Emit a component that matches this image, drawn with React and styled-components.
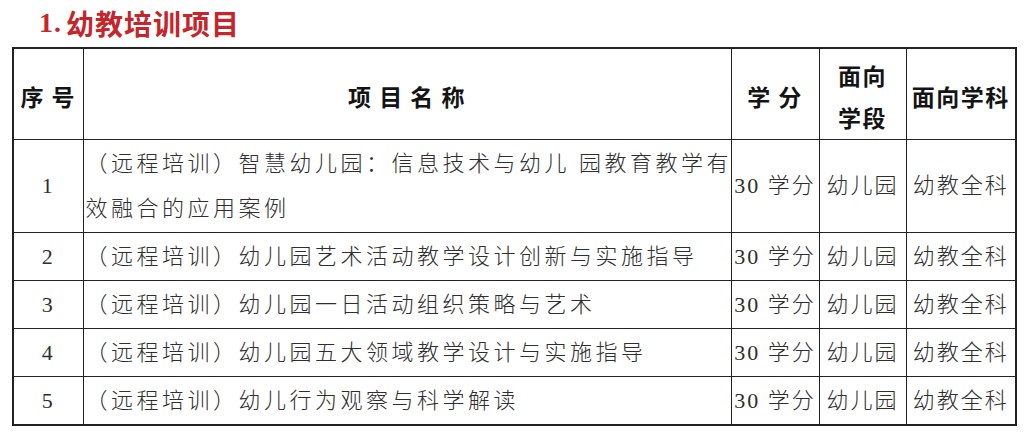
import styled, { createGlobalStyle } from 'styled-components';

const GlobalStyle = createGlobalStyle`
  html, body {
    margin: 0;
    padding: 0;
    background: #ffffff;
  }
`;

const Page = styled.div`
  width: 1025px;
  height: 437px;
  padding: 0 11px 0 12px;
  box-sizing: border-box;
  overflow: hidden;
  background: #fff;
`;

const Title = styled.h2`
  margin: 0;
  height: 47px;
  display: flex;
  align-items: center;
  padding: 0 0 2px 27px;
  box-sizing: border-box;
  font-family: 'Noto Sans CJK SC', sans-serif;
  font-size: 28px;
  font-weight: 700;
  color: #c4262b;
  letter-spacing: 1px;
`;

const Num = styled.span`
  font-family: 'Liberation Serif', serif;
  font-weight: 700;
  margin-right: 4px;
`;

const Table = styled.table`
  width: 1003px;
  border-collapse: collapse;
  table-layout: fixed;
  border: 2px solid #222;
`;

const HeadRow = styled.tr`
  height: 91px;
`;

const Row = styled.tr`
  height: ${(p) => p.$h}px;
`;

const Th = styled.th`
  border: 1.5px solid #222;
  padding: 4px 0 0;
  font-family: 'Noto Sans CJK SC', sans-serif;
  font-size: 23px;
  font-weight: 700;
  color: #141414;
  letter-spacing: 1.5px;
  line-height: 42px;
  text-align: center;
  vertical-align: middle;
  white-space: pre;
`;

const Td = styled.td`
  border: 1.5px solid #222;
  padding: ${(p) => (p.$left ? '0 0 0 2px' : '0')};
  font-family: 'Liberation Serif', 'Noto Sans CJK SC', serif;
  font-size: 22px;
  font-weight: 300;
  color: #2e2e2e;
  letter-spacing: ${(p) => (p.$left ? '3.5px' : '2px')};
  line-height: 45px;
  text-align: ${(p) => (p.$left ? 'left' : 'center')};
  vertical-align: middle;
  white-space: nowrap;
  overflow: hidden;
`;

const rows = [
  {
    no: '1',
    name: ['（远程培训）智慧幼儿园：信息技术与幼儿 园教育教学有', '效融合的应用案例'],
    h: 93,
  },
  { no: '2', name: ['（远程培训）幼儿园艺术活动教学设计创新与实施指导'], h: 48 },
  { no: '3', name: ['（远程培训）幼儿园一日活动组织策略与艺术'], h: 48 },
  { no: '4', name: ['（远程培训）幼儿园五大领域教学设计与实施指导'], h: 48 },
  { no: '5', name: ['（远程培训）幼儿行为观察与科学解读'], h: 49 },
];

export default function App() {
  return (
    <>
      <GlobalStyle />
      <Page>
        <Title>
          <Num>1.</Num>幼教培训项目
        </Title>
        <Table>
          <colgroup>
            <col style={{ width: 70 }} />
            <col style={{ width: 648 }} />
            <col style={{ width: 88 }} />
            <col style={{ width: 87 }} />
            <col style={{ width: 110 }} />
          </colgroup>
          <thead>
            <HeadRow>
              <Th>序 号</Th>
              <Th>项 目 名 称</Th>
              <Th>学 分</Th>
              <Th>
                面向
                <br />
                学段
              </Th>
              <Th>面向学科</Th>
            </HeadRow>
          </thead>
          <tbody>
            {rows.map((r) => (
              <Row key={r.no} $h={r.h}>
                <Td>{r.no}</Td>
                <Td $left>
                  {r.name.map((line, i) => (
                    <div key={i}>{line}</div>
                  ))}
                </Td>
                <Td>30 学分</Td>
                <Td>幼儿园</Td>
                <Td>幼教全科</Td>
              </Row>
            ))}
          </tbody>
        </Table>
      </Page>
    </>
  );
}
